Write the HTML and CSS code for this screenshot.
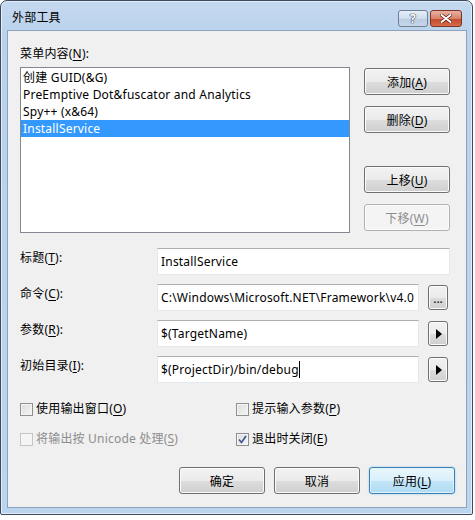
FILE: index.html
```html
<!DOCTYPE html>
<html lang="zh-CN">
<head>
    <meta charset="UTF-8">
    <meta name="viewport" content="width=device-width, initial-scale=1.0">
    <title>外部工具</title>
    <link rel="stylesheet" href="styles.css">
</head>
<body>
    <div class="window">
        <div class="titlebar">
            <span class="title">外部工具</span>
            <div class="caption-buttons">
                <span class="cap-btn help">?</span>
                <span class="cap-btn close">
                    <svg width="12" height="9" viewBox="0 0 12 9">
                        <path d="M1.5 1 L10.5 8 M10.5 1 L1.5 8" stroke="#5a1e12" stroke-width="3.4" stroke-linecap="round"/>
                        <path d="M1.5 1 L10.5 8 M10.5 1 L1.5 8" stroke="#ffffff" stroke-width="2" stroke-linecap="round"/>
                    </svg>
                </span>
            </div>
        </div>

        <div class="client">
            <div class="field-label">菜单内容(<u>N</u>):</div>
            <div class="top-row">
                <ul class="listbox">
                    <li>创建 GUID(&amp;G)</li>
                    <li>PreEmptive Dot&amp;fuscator and Analytics</li>
                    <li>Spy++ (x&amp;64)</li>
                    <li class="selected">InstallService</li>
                </ul>
                <div class="side-buttons">
                    <button class="btn">添加(<u>A</u>)</button>
                    <button class="btn">删除(<u>D</u>)</button>
                    <button class="btn spaced">上移(<u>U</u>)</button>
                    <button class="btn" disabled>下移(<u>W</u>)</button>
                </div>
            </div>

            <div class="form">
                <div class="form-row">
                    <label>标题(<u>T</u>):</label>
                    <div class="textbox wide">InstallService</div>
                </div>
                <div class="form-row">
                    <label>命令(<u>C</u>):</label>
                    <div class="textbox">C:\Windows\Microsoft.NET\Framework\v4.0</div>
                    <button class="btn small dots">...</button>
                </div>
                <div class="form-row">
                    <label>参数(<u>R</u>):</label>
                    <div class="textbox">$(TargetName)</div>
                    <button class="btn small"><span class="arrow"></span></button>
                </div>
                <div class="form-row">
                    <label>初始目录(<u>I</u>):</label>
                    <div class="textbox">$(ProjectDir)/bin/debug<span class="caret"></span></div>
                    <button class="btn small"><span class="arrow"></span></button>
                </div>
            </div>

            <div class="options">
                <div class="check"><span class="box"></span>使用输出窗口(<u>O</u>)</div>
                <div class="check"><span class="box"></span>提示输入参数(<u>P</u>)</div>
                <div class="check disabled"><span class="box"></span>将输出按 Unicode 处理(<u>S</u>)</div>
                <div class="check"><span class="box checked">
                    <svg width="9" height="9" viewBox="0 0 9 9"><path d="M1 4.5 L3.5 7.5 L8 1" fill="none" stroke="#3d5290" stroke-width="1.6"/></svg>
                </span>退出时关闭(<u>E</u>)</div>
            </div>

            <div class="dialog-buttons">
                <button class="btn">确定</button>
                <button class="btn">取消</button>
                <button class="btn default">应用(<u>L</u>)</button>
            </div>
        </div>
    </div>
</body>
</html>
```

FILE: styles.css
```css
body {
    margin: 0;
    background-color: #ffffff;
    font-family: "Noto Sans", "Noto Sans CJK SC", sans-serif;
    font-size: 12px;
    letter-spacing: 0.2px;
    color: #000000;
}
u {
    text-decoration-thickness: 1px;
    text-underline-offset: 2px;
}
.window {
    width: 473px;
    height: 515px;
    box-sizing: border-box;
    border: 1px solid #3b4a5c;
    border-radius: 7px 7px 2px 2px;
    background: linear-gradient(180deg, #c4d9f0 0%, #b9d1eb 40px, #bcd5ee 100%);
    box-shadow: inset 0 0 0 1px #e4eefa;
}
.titlebar {
    height: 28px;
    display: flex;
    align-items: flex-start;
    justify-content: space-between;
}
.title {
    margin: 9px 0 0 11px;
    line-height: 16px;
    font-size: 12px;
}
.caption-buttons {
    display: flex;
    gap: 2px;
    margin: 9px 10px 0 0;
}
.cap-btn {
    height: 15px;
    box-sizing: content-box;
    border: 1px solid #6e7f95;
    border-radius: 3px;
    display: flex;
    align-items: center;
    justify-content: center;
}
.help {
    width: 28px;
    background: linear-gradient(180deg, #e6eef8 0%, #cfdcec 50%, #b8cbe0 51%, #c7d8ea 100%);
    color: #ffffff;
    font-weight: bold;
    font-size: 12px;
    line-height: 15px;
    text-shadow: 0 0 1px #2b3d55, 0 0 1px #2b3d55, 0 0 1px #2b3d55;
}
.close {
    width: 30px;
    border-color: #7b3524;
    background: linear-gradient(180deg, #eab1a3 0%, #d9826c 50%, #c4472b 51%, #d66b4b 100%);
}
.client {
    margin: 1px 5px 0 6px;
    height: 478px;
    box-sizing: border-box;
    border: 1px solid #8da3bd;
    background-color: #f0f0f0;
    padding: 15px 0 0 12px;
}
.field-label {
    line-height: 16px;
    margin-bottom: 5px;
}
.top-row {
    display: flex;
    gap: 14px;
}
.listbox {
    width: 330px;
    height: 166px;
    box-sizing: border-box;
    margin: 0;
    padding: 1px 0 0 0;
    list-style: none;
    border: 1px solid #828790;
    background-color: #ffffff;
}
.listbox li {
    line-height: 17px;
    height: 17px;
    padding-left: 2px;
    white-space: nowrap;
    overflow: hidden;
}
.listbox li.selected {
    background-color: #3399ff;
    color: #ffffff;
}
.side-buttons {
    display: flex;
    flex-direction: column;
    gap: 11px;
    padding-top: 1px;
}
.side-buttons .spaced {
    margin-top: 22px;
}
.btn {
    width: 86px;
    height: 27px;
    padding: 0;
    font: inherit;
    letter-spacing: inherit;
    color: #000000;
    border: 1px solid #707070;
    border-radius: 3px;
    background: linear-gradient(180deg, #f2f2f2 0%, #ebebeb 50%, #dddddd 51%, #cfcfcf 100%);
    box-shadow: inset 0 0 0 1px #fbfbfb;
}
.btn:disabled {
    color: #8d8d8d;
    border-color: #adb2b5;
    background: #f4f4f4;
}
.btn.default {
    border-color: #3c7fb1;
    background: linear-gradient(180deg, #eaf6fd 0%, #d9f0fc 50%, #c2e5f8 51%, #b0dbf2 100%);
    box-shadow: inset 0 0 0 1px #dff3fd, 0 0 2px #7fc4ef;
}
.form {
    margin-top: 15px;
    display: flex;
    flex-direction: column;
    gap: 9px;
}
.form-row {
    display: flex;
    align-items: flex-start;
    height: 27px;
}
.form-row label {
    width: 137px;
    line-height: 16px;
    padding-top: 2px;
}
.textbox {
    width: 262px;
    height: 27px;
    box-sizing: border-box;
    border: 1px solid #e3e9ef;
    border-top-color: #abadb3;
    background-color: #ffffff;
    padding: 0 3px;
    line-height: 25px;
    white-space: nowrap;
    overflow: hidden;
}
.textbox.wide {
    width: 293px;
}
.caret {
    display: inline-block;
    width: 1px;
    height: 17px;
    background-color: #000000;
    vertical-align: -4px;
}
.btn.small {
    width: 20px;
    height: 25px;
    margin: 1px 0 0 9px;
    display: flex;
    align-items: center;
    justify-content: center;
}
.btn.dots {
    align-items: flex-end;
    padding-bottom: 5px;
    line-height: 10px;
    letter-spacing: 0;
}
.arrow {
    width: 0;
    height: 0;
    border-top: 5px solid transparent;
    border-bottom: 5px solid transparent;
    border-left: 6px solid #000000;
    margin-left: 2px;
}
.options {
    margin-top: 18px;
    display: grid;
    grid-template-columns: 216px auto;
    row-gap: 14px;
}
.check {
    display: flex;
    align-items: center;
    line-height: 16px;
    height: 16px;
}
.check .box {
    width: 11px;
    height: 11px;
    border: 1px solid #8e8f8f;
    background: linear-gradient(135deg, #dcdcdc 0%, #f6f6f6 100%);
    box-shadow: inset 0 0 0 1px #f4f4f4;
    margin-right: 3px;
    display: flex;
    align-items: center;
    justify-content: center;
}
.check.disabled {
    color: #8d8d8d;
}
.check.disabled .box {
    border-color: #c6c6c6;
    background: #f4f4f4;
}
.dialog-buttons {
    margin-top: 20px;
    padding-right: 11px;
    display: flex;
    justify-content: flex-end;
    gap: 9px;
}
.dialog-buttons .btn {
    width: 86px;
}
```
